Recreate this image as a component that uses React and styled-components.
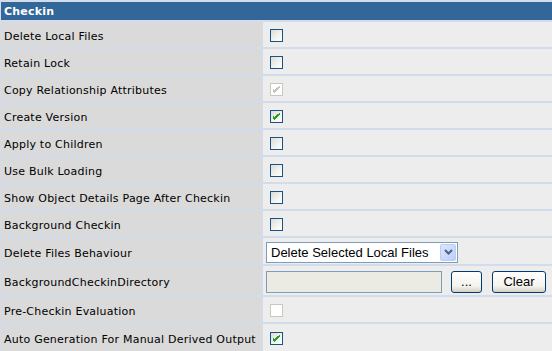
import React from "react";
import styled, { createGlobalStyle } from "styled-components";

const GlobalStyle = createGlobalStyle`
  html, body {
    margin: 0;
    padding: 0;
    background: #d3dcea;
  }
`;

const Panel = styled.div`
  display: grid;
  grid-template-columns: 261px 1fr;
  gap: 2px 1px;
  padding: 2px 0 0 1px;
  background: #d3dcea;
  font-family: "DejaVu Sans", Verdana, sans-serif;
  font-size: 11px;
  letter-spacing: 0.22px;
  color: #000;
`;

const Header = styled.div`
  grid-column: 1 / -1;
  height: 18px;
  display: flex;
  align-items: center;
  padding-left: 3px;
  background: #336699;
  color: #fff;
  font-weight: bold;
`;

const Label = styled.div`
  box-sizing: border-box;
  height: ${(p) => p.h}px;
  display: flex;
  align-items: center;
  padding: 4px 0 0 3px;
  background: #dadada;
  white-space: nowrap;
`;

const Value = styled.div`
  box-sizing: border-box;
  height: ${(p) => p.h}px;
  display: flex;
  align-items: center;
  padding: 2px 0 0 3px;
  background: #ededed;
`;

const Box = styled.span`
  box-sizing: border-box;
  width: 13px;
  height: 13px;
  margin-left: 4px;
  display: flex;
  align-items: center;
  justify-content: center;
  border: 1px solid ${(p) => (p.disabled ? "#cac8bb" : "#1c5180")};
  background: ${(p) =>
    p.disabled
      ? "#fff"
      : "linear-gradient(135deg, #dcdcd7 0%, #f4f4f0 60%, #ffffff 100%)"};
`;

const Select = styled.div`
  box-sizing: border-box;
  width: 192px;
  height: 21px;
  display: flex;
  align-items: center;
  justify-content: space-between;
  border: 1px solid #7f9db9;
  background: #fff;
  padding: 0 1px 0 4px;
  font-family: "Liberation Sans", Arial, sans-serif;
  font-size: 13px;
  letter-spacing: 0;
`;

const DropButton = styled.span`
  box-sizing: border-box;
  width: 16px;
  height: 17px;
  display: flex;
  align-items: center;
  justify-content: center;
  border: 1px solid #b9cdf5;
  border-radius: 2px;
  background: linear-gradient(135deg, #dbe5fd 0%, #bccffb 100%);
`;

const Field = styled.div`
  box-sizing: border-box;
  width: 176px;
  height: 22px;
  border: 1px solid #7f9db9;
  background: #ebebe4;
`;

const Button = styled.button`
  box-sizing: border-box;
  height: 22px;
  width: ${(p) => p.w}px;
  margin-left: ${(p) => p.gap}px;
  padding: 0;
  border: 1px solid #003c74;
  border-radius: 3px;
  background: linear-gradient(180deg, #ffffff 0%, #f4f3ee 70%, #d6d0c5 100%);
  font-family: "Liberation Sans", Arial, sans-serif;
  font-size: 13px;
  color: #000;
`;

const Check = ({ color }) => (
  <svg width="7" height="7" viewBox="0 0 7 7" shapeRendering="crispEdges">
    <path
      fill={color}
      d="M6 0h1v2h-1v1h-1v1h-1v1h-1v1h-1v1h-1v-1h-1v-1h-1v-3h1v1h1v1h1v-1h1v-1h1v-1h1z"
    />
  </svg>
);

const CheckBox = ({ checked, disabled }) => (
  <Box disabled={disabled}>
    {checked && <Check color={disabled ? "#c4c4c0" : "#21a121"} />}
  </Box>
);

const rows = [
  { label: "Delete Local Files", h: 25, box: {} },
  { label: "Retain Lock", h: 25, box: {} },
  { label: "Copy Relationship Attributes", h: 25, box: { checked: true, disabled: true } },
  { label: "Create Version", h: 25, box: { checked: true } },
  { label: "Apply to Children", h: 25, box: {} },
  { label: "Use Bulk Loading", h: 25, box: {} },
  { label: "Show Object Details Page After Checkin", h: 25, box: {} },
  { label: "Background Checkin", h: 25, box: {} },
  { label: "Delete Files Behaviour", h: 26, kind: "select" },
  { label: "BackgroundCheckinDirectory", h: 29, kind: "dir" },
  { label: "Pre-Checkin Evaluation", h: 25, box: { disabled: true } },
  { label: "Auto Generation For Manual Derived Output", h: 27, box: { checked: true } },
];

const renderValue = (row) => {
  if (row.kind === "select") {
    return (
      <Select>
        <span>Delete Selected Local Files</span>
        <DropButton>
          <svg width="9" height="6" viewBox="0 0 9 6">
            <path d="M1 1l3.5 3.5L8 1" fill="none" stroke="#4d6185" strokeWidth="2" />
          </svg>
        </DropButton>
      </Select>
    );
  }
  if (row.kind === "dir") {
    return (
      <>
        <Field />
        <Button w={31} gap={9}>...</Button>
        <Button w={54} gap={10}>Clear</Button>
      </>
    );
  }
  return <CheckBox {...row.box} />;
};

export default function App() {
  return (
    <>
      <GlobalStyle />
      <Panel>
        <Header>Checkin</Header>
        {rows.map((row) => (
          <React.Fragment key={row.label}>
            <Label h={row.h}>{row.label}</Label>
            <Value h={row.h}>{renderValue(row)}</Value>
          </React.Fragment>
        ))}
      </Panel>
    </>
  );
}
